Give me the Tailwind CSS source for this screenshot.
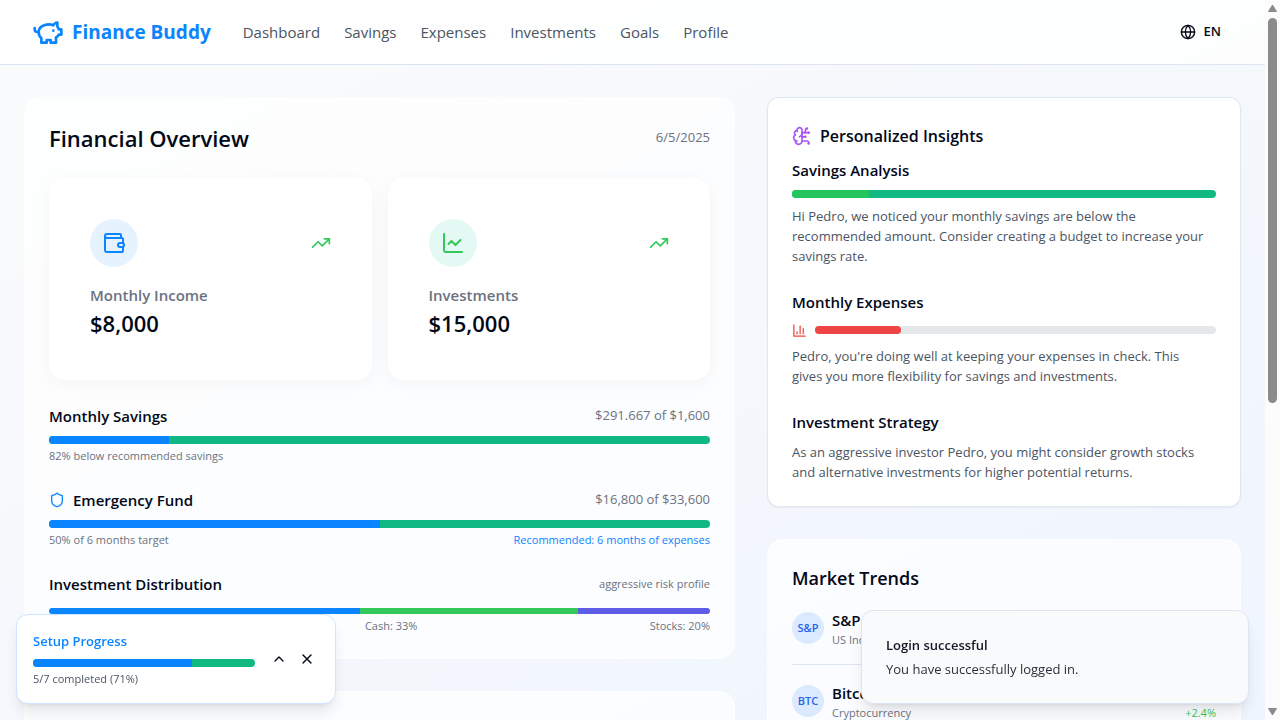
<!DOCTYPE html>
<html lang="en">
<head>
<meta charset="utf-8">
<meta name="viewport" content="width=device-width, initial-scale=1">
<title>Finance Buddy</title>
<script src="https://cdn.jsdelivr.net/npm/@tailwindcss/browser@4"></script>
</head>
<body class="flex h-screen overflow-hidden bg-[#fcfcfc] font-['Segoe_UI','Open_Sans','Noto_Sans',sans-serif] text-[#020817]">
<div class="h-full min-w-0 flex-1 overflow-hidden bg-linear-to-br from-[#fafbfc] via-[#f5f8fc] to-[#eff5ff]">
  <header class="flex h-[65px] items-center justify-between border-b border-[#dce6f2] bg-white/80 px-8">
    <div class="flex items-center gap-8">
      <a href="#" class="flex items-center gap-2 text-[19px] font-bold text-[#0a84ff]">
        <svg class="size-8" viewBox="0 0 24 24" fill="none" stroke="currentColor" stroke-width="2" stroke-linecap="round" stroke-linejoin="round" aria-hidden="true"><path d="M19 5c-1.500 0-2.800 1.400-3 2-3.500-1.500-11-.300-11 5 0 1.800 0 3 2 4.500V20h4v-2h3v2h4v-4c1-.500 1.700-1 2-2h2v-4h-2c0-1-.500-1.500-1-2V5z"/><path d="M2 9v1c0 1.100.900 2 2 2h1"/><path d="M16 11h.01"/></svg>
        Finance Buddy
      </a>
      <nav class="flex items-center gap-6 text-[15px] text-[#4b5563]">
        <a href="#">Dashboard</a>
        <a href="#">Savings</a>
        <a href="#">Expenses</a>
        <a href="#">Investments</a>
        <a href="#">Goals</a>
        <a href="#">Profile</a>
      </nav>
    </div>
    <button type="button" class="flex h-9 items-center gap-2 px-3 text-[13px] font-semibold">
      <svg class="size-4" viewBox="0 0 24 24" fill="none" stroke="currentColor" stroke-width="2" stroke-linecap="round" stroke-linejoin="round" aria-hidden="true"><circle cx="12" cy="12" r="10"/><path d="M12 2a14.500 14.500 0 0 0 0 20 14.500 14.500 0 0 0 0-20"/><path d="M2 12h20"/></svg>
      EN
    </button>
  </header>

  <main class="grid grid-cols-[3fr_2fr] items-start gap-8 px-6 pt-8">
    <div class="flex min-w-0 flex-col gap-8">
      <section class="rounded-2xl border border-white/40 bg-white/70 p-6">
        <div class="mb-6 flex h-8 items-center justify-between">
          <h1 class="text-[22px] font-semibold">Financial Overview</h1>
          <span class="text-[13px] text-[#6b7280]">6/5/2025</span>
        </div>
        <div class="mb-6 grid grid-cols-2 gap-4">
          <div class="rounded-2xl border border-white/40 bg-white/90 p-10 shadow-[0_4px_20px_rgba(0,0,0,0.04)]">
            <div class="mb-4 flex items-center justify-between">
              <div class="flex size-12 items-center justify-center rounded-full bg-[#e6f3ff] text-[#0a84ff]">
                <svg class="size-6" viewBox="0 0 24 24" fill="none" stroke="currentColor" stroke-width="2" stroke-linecap="round" stroke-linejoin="round" aria-hidden="true"><path d="M19 7V4a1 1 0 0 0-1-1H5a2 2 0 0 0-2 2v14a2 2 0 0 0 2 2h15a1 1 0 0 0 1-1v-4M3 5a2 2 0 0 0 2 2h15a1 1 0 0 1 1 1v4"/><rect x="16" y="12" width="6" height="4" rx="2"/></svg>
              </div>
              <svg class="size-5 text-[#34c759]" viewBox="0 0 24 24" fill="none" stroke="currentColor" stroke-width="2" stroke-linecap="round" stroke-linejoin="round" aria-hidden="true"><path d="m22 7-8.500 8.500-5-5L2 17"/><path d="M16 7h6v6"/></svg>
            </div>
            <h2 class="text-[15px] leading-6 font-semibold text-[#6b7280]">Monthly Income</h2>
            <p class="text-[22px] leading-8 font-semibold">$8,000</p>
          </div>
          <div class="rounded-2xl border border-white/40 bg-white/90 p-10 shadow-[0_4px_20px_rgba(0,0,0,0.04)]">
            <div class="mb-4 flex items-center justify-between">
              <div class="flex size-12 items-center justify-center rounded-full bg-[#e4f9f4] text-[#34c759]">
                <svg class="size-6" viewBox="0 0 24 24" fill="none" stroke="currentColor" stroke-width="2" stroke-linecap="round" stroke-linejoin="round" aria-hidden="true"><path d="M3 3v16a2 2 0 0 0 2 2h16"/><path d="m7.500 13 3-3 4 4 5-5"/></svg>
              </div>
              <svg class="size-5 text-[#34c759]" viewBox="0 0 24 24" fill="none" stroke="currentColor" stroke-width="2" stroke-linecap="round" stroke-linejoin="round" aria-hidden="true"><path d="m22 7-8.500 8.500-5-5L2 17"/><path d="M16 7h6v6"/></svg>
            </div>
            <h2 class="text-[15px] leading-6 font-semibold text-[#6b7280]">Investments</h2>
            <p class="text-[22px] leading-8 font-semibold">$15,000</p>
          </div>
        </div>

        <div class="flex flex-col gap-6">
          <div>
            <div class="mb-2 flex h-6 items-center justify-between">
              <h3 class="text-[15px] font-semibold">Monthly Savings</h3>
              <span class="text-[13px] text-[#6b7280]">$291.667 of $1,600</span>
            </div>
            <div class="h-2 overflow-hidden rounded-full bg-[#10b981]"><div class="h-full bg-[#0a84ff]" style="width:18.2%"></div></div>
            <p class="mt-1 text-[11px] leading-4 text-[#6b7280]">82% below recommended savings</p>
          </div>
          <div>
            <div class="mb-2 flex h-6 items-center justify-between">
              <h3 class="flex items-center gap-2 text-[15px] font-semibold">
                <svg class="size-4 text-[#0a84ff]" viewBox="0 0 24 24" fill="none" stroke="currentColor" stroke-width="2" stroke-linecap="round" stroke-linejoin="round" aria-hidden="true"><path d="M20 13c0 5-3.500 7.500-7.660 8.950a1 1 0 0 1-.670-.010C7.500 20.500 4 18 4 13V6a1 1 0 0 1 1-1c2 0 4.500-1.200 6.240-2.720a1.170 1.170 0 0 1 1.520 0C14.510 3.810 17 5 19 5a1 1 0 0 1 1 1z"/></svg>
                Emergency Fund
              </h3>
              <span class="text-[13px] text-[#6b7280]">$16,800 of $33,600</span>
            </div>
            <div class="h-2 overflow-hidden rounded-full bg-[#10b981]"><div class="h-full bg-[#0a84ff]" style="width:50%"></div></div>
            <div class="mt-1 flex justify-between text-[11px] leading-4 text-[#6b7280]">
              <span>50% of 6 months target</span>
              <span class="text-[#0a84ff]">Recommended: 6 months of expenses</span>
            </div>
          </div>
          <div>
            <div class="mb-3 flex h-6 items-center justify-between">
              <h3 class="text-[15px] font-semibold">Investment Distribution</h3>
              <span class="text-[11px] text-[#6b7280]">aggressive risk profile</span>
            </div>
            <div class="flex h-1.5 overflow-hidden rounded-full">
              <div class="bg-[#0a84ff]" style="width:47%"></div>
              <div class="bg-[#34c759]" style="width:33%"></div>
              <div class="bg-[#5e5ce6]" style="width:20%"></div>
            </div>
            <div class="mt-1 flex justify-between text-[11px] leading-4 text-[#6b7280]">
              <span>Real Estate: 47%</span>
              <span>Cash: 33%</span>
              <span>Stocks: 20%</span>
            </div>
          </div>
        </div>
      </section>
      <section class="h-40 rounded-2xl border border-white/40 bg-white/70"></section>
    </div>

    <div class="flex min-w-0 flex-col gap-8">
      <section class="rounded-xl border border-[#dfe7f1] bg-white p-6 shadow-xs">
        <h2 class="mb-2 flex items-center gap-2 text-base leading-7 font-semibold">
          <svg class="size-5 text-[#a855f7]" viewBox="0 0 24 24" fill="none" stroke="currentColor" stroke-width="2" stroke-linecap="round" stroke-linejoin="round" aria-hidden="true"><path d="M12 5a3 3 0 1 0-5.997.125 4 4 0 0 0-2.526 5.770 4 4 0 0 0 .556 6.588A4 4 0 1 0 12 18Z"/><path d="M9 13a4.500 4.500 0 0 0 3-4"/><path d="M6.003 5.125A3 3 0 0 0 6.401 6.500"/><path d="M3.477 10.896a4 4 0 0 1 .585-.396"/><path d="M6 18a4 4 0 0 1-1.967-.516"/><path d="M12 13h4"/><path d="M12 18h6a2 2 0 0 1 2 2v1"/><path d="M12 8h8"/><path d="M16 8V5a2 2 0 0 1 2-2"/><circle cx="16" cy="13" r=".5"/><circle cx="18" cy="3" r=".5"/><circle cx="20" cy="21" r=".5"/><circle cx="20" cy="8" r=".5"/></svg>
          Personalized Insights
        </h2>
        <div class="flex flex-col gap-6">
          <div>
            <h3 class="mb-2 text-[15px] leading-6 font-semibold">Savings Analysis</h3>
            <div class="mb-2 h-2 overflow-hidden rounded-full bg-[#10b981]"><div class="h-full bg-[#22c55e]" style="width:18.2%"></div></div>
            <p class="pr-2 text-[13px] leading-5 text-[#4b5563]">Hi Pedro, we noticed your monthly savings are below the recommended amount. Consider creating a budget to increase your savings rate.</p>
          </div>
          <div>
            <h3 class="mb-2 text-[15px] leading-6 font-semibold">Monthly Expenses</h3>
            <div class="mb-2 flex h-4 items-center gap-2">
              <svg class="size-[15px] text-[#ef4444]" viewBox="0 0 24 24" fill="none" stroke="currentColor" stroke-width="2" stroke-linecap="round" stroke-linejoin="round" aria-hidden="true"><path d="M3 3v18h18"/><path d="M18 17V9"/><path d="M13 17V5"/><path d="M8 17v-3"/></svg>
              <div class="h-2 flex-1 rounded-full bg-[#e5e7eb]"><div class="h-full rounded-full bg-[#ef4444]" style="width:21.5%"></div></div>
            </div>
            <p class="pr-2 text-[13px] leading-5 text-[#4b5563]">Pedro, you're doing well at keeping your expenses in check. This gives you more flexibility for savings and investments.</p>
          </div>
          <div>
            <h3 class="mb-2 text-[15px] leading-6 font-semibold">Investment Strategy</h3>
            <p class="pr-2 text-[13px] leading-5 text-[#4b5563]">As an aggressive investor Pedro, you might consider growth stocks and alternative investments for higher potential returns.</p>
          </div>
        </div>
      </section>

      <section class="rounded-2xl border border-white/40 bg-white/70 p-6">
        <h2 class="text-lg leading-7 font-semibold">Market Trends</h2>
        <ul class="divide-y divide-[#dce6f2]">
          <li class="flex items-center justify-between py-4">
            <div class="flex items-center gap-2">
              <span class="flex size-8 items-center justify-center rounded-full bg-[#dbeafe] text-[11px] font-semibold text-[#2563eb]">S&amp;P</span>
              <div>
                <p class="text-[15px] leading-6 font-semibold">S&amp;P 500</p>
                <p class="text-[11px] leading-4 text-[#6b7280]">US Index</p>
              </div>
            </div>
          </li>
          <li class="flex items-end justify-between py-4">
            <div class="flex items-center gap-2">
              <span class="flex size-8 items-center justify-center rounded-full bg-[#dbeafe] text-[11px] font-semibold text-[#2563eb]">BTC</span>
              <div>
                <p class="text-[15px] leading-6 font-semibold">Bitcoin</p>
                <p class="text-[11px] leading-4 text-[#6b7280]">Cryptocurrency</p>
              </div>
            </div>
            <span class="text-[11px] leading-4 text-[#34c759]">+2.4%</span>
          </li>
        </ul>
      </section>
    </div>
  </main>
</div>

<div class="flex w-[15px] shrink-0 flex-col items-center justify-between py-1" aria-hidden="true">
  <svg class="h-2 w-[9px] shrink-0" viewBox="0 0 9 8"><path d="M4.500 1 8.500 7.500H.500z" fill="#8b8b8b" stroke="#8b8b8b" stroke-linejoin="round"/></svg>
  <div class="mt-1.5 w-[9px] flex-[385] rounded-full bg-[#8b8b8b]"></div>
  <div class="flex-[305]"></div>
  <svg class="h-2 w-[9px] shrink-0" viewBox="0 0 9 8"><path d="M4.500 7 8.500 .500H.500z" fill="#8b8b8b" stroke="#8b8b8b" stroke-linejoin="round"/></svg>
</div>

<aside class="fixed bottom-4 left-4 flex w-80 items-center gap-3 rounded-xl border border-[#cfe4ff] bg-white p-4 shadow-lg">
  <div class="flex-1">
    <h2 class="mb-2 text-[13px] leading-5 font-semibold text-[#0a84ff]">Setup Progress</h2>
    <div class="mb-1 h-2 overflow-hidden rounded-full bg-[#10b981]"><div class="h-full bg-[#0a84ff]" style="width:71.4%"></div></div>
    <p class="text-[11px] leading-4 text-[#4b5563]">5/7 completed (71%)</p>
  </div>
  <div class="flex gap-1">
    <button type="button" aria-label="Expand" class="flex size-6 items-center justify-center"><svg class="size-4" viewBox="0 0 24 24" fill="none" stroke="currentColor" stroke-width="2" stroke-linecap="round" stroke-linejoin="round"><path d="m18 15-6-6-6 6"/></svg></button>
    <button type="button" aria-label="Close" class="flex size-6 items-center justify-center"><svg class="size-4" viewBox="0 0 24 24" fill="none" stroke="currentColor" stroke-width="2" stroke-linecap="round" stroke-linejoin="round"><path d="M18 6 6 18"/><path d="m6 6 12 12"/></svg></button>
  </div>
</aside>

<div role="status" class="fixed right-[31px] bottom-4 w-[388px] rounded-xl border border-[#dce6f2] bg-[#f9fafc] p-6 shadow-lg">
  <p class="mb-1 text-[13px] leading-5 font-semibold text-[#111827]">Login successful</p>
  <p class="text-[13px] leading-5 text-[#2b303b]">You have successfully logged in.</p>
</div>
</body>
</html>
